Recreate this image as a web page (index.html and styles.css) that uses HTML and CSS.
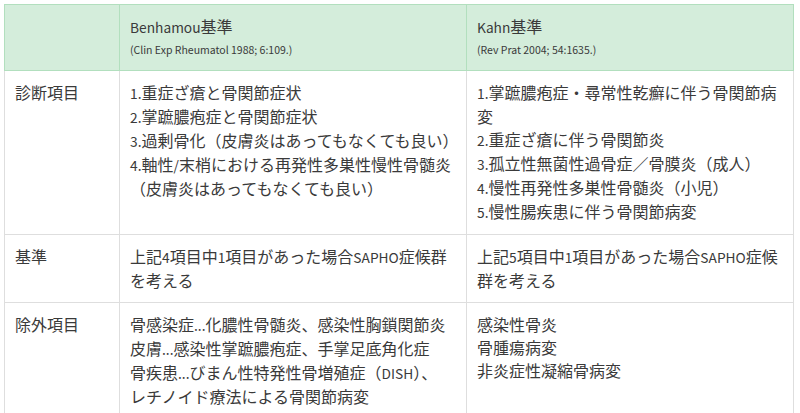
FILE: index.html
```
<!DOCTYPE html>
<html lang="ja">
<head>
<meta charset="utf-8">
<link rel="stylesheet" href="styles.css">
</head>
<body>
<table class="criteria">
  <colgroup>
    <col class="c1">
    <col class="c2">
    <col class="c3">
  </colgroup>
  <thead>
    <tr>
      <th></th>
      <th><div class="title"><span class="en">Benhamou</span>基準</div><div class="cite">(Clin Exp Rheumatol 1988; 6:109.)</div></th>
      <th><div class="title"><span class="en">Kahn</span>基準</div><div class="cite">(Rev Prat 2004; 54:1635.)</div></th>
    </tr>
  </thead>
  <tbody>
    <tr>
      <td>診断項目</td>
      <td><span class="en">1.</span>重症ざ瘡と骨関節症状<br><span class="en">2.</span>掌蹠膿疱症と骨関節症状<br><span class="en">3.</span>過剰骨化（皮膚炎はあってもなくても良い<span class="half">）</span><br><span class="en">4.</span>軸性<span class="en">/</span>末梢における再発性多巣性慢性骨髄炎<br>（皮膚炎はあってもなくても良い）</td>
      <td><span class="en">1.</span>掌蹠膿疱症・尋常性乾癬に伴う骨関節病変<br><span class="en">2.</span>重症ざ瘡に伴う骨関節炎<br><span class="en">3.</span>孤立性無菌性過骨症／骨膜炎（成人）<br><span class="en">4.</span>慢性再発性多巣性骨髄炎（小児）<br><span class="en">5.</span>慢性腸疾患に伴う骨関節病変</td>
    </tr>
    <tr>
      <td>基準</td>
      <td>上記<span class="en">4</span>項目中<span class="en">1</span>項目があった場合<span class="en">SAPHO</span>症候群を考える</td>
      <td>上記<span class="en">5</span>項目中<span class="en">1</span>項目があった場合<span class="en">SAPHO</span>症候群を考える</td>
    </tr>
    <tr>
      <td>除外項目</td>
      <td>骨感染症<span class="en">...</span>化膿性骨髄炎、感染性胸鎖関節炎<br>皮膚<span class="en">...</span>感染性掌蹠膿疱症、手掌足底角化症<br>骨疾患<span class="en">...</span>びまん性特発性骨増殖症（<span class="en">DISH</span>）、<br>レチノイド療法による骨関節病変</td>
      <td>感染性骨炎<br>骨腫瘍病変<br>非炎症性凝縮骨病変</td>
    </tr>
  </tbody>
</table>
</body>
</html>
```
FILE: styles.css
```
html, body {
  margin: 0;
  padding: 0;
  background: #fff;
}
body {
  padding: 4px;
  font-family: "Noto Sans CJK JP", "Noto Sans", sans-serif;
  color: #3a3a3a;
}
.criteria {
  border-collapse: collapse;
  table-layout: fixed;
  width: 789px;
  font-size: 16px;
  line-height: 23px;
}
.c1 { width: 115px; }
.c2 { width: 347px; }
.c3 { width: 327px; }
.criteria th,
.criteria td {
  text-align: left;
  vertical-align: top;
  padding: 10px 9px 10px 10px;
  font-weight: normal;
}
.criteria td {
  border: 1px solid #dedede;
}
.criteria th {
  background: #d4eddb;
  border: 1px solid #b2dfbe;
}
.title {
  line-height: 23px;
}
.cite {
  font-size: 10.5px;
  line-height: 21px;
}
.en {
  font-size: 0.86em;
}
.half {
  font-feature-settings: "halt";
}
```
